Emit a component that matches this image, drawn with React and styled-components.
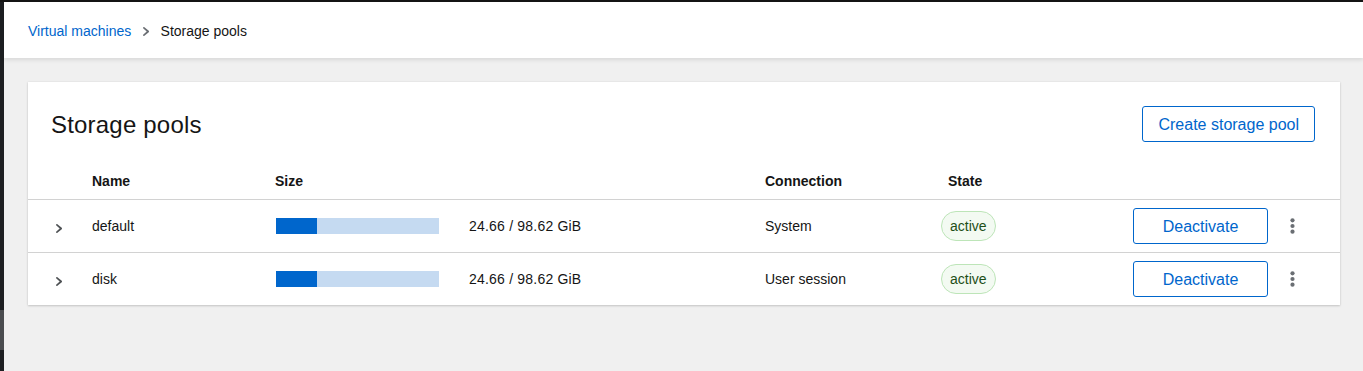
import styled, { createGlobalStyle } from "styled-components"

const GlobalStyle = createGlobalStyle`
  html, body {
    margin: 0;
    background: #f0f0f0;
  }
  body {
    font-family: "Liberation Sans", Arial, sans-serif;
    color: #151515;
    font-size: 14px;
  }
  * { box-sizing: border-box; }
`

const Frame = styled.div`
  display: flex;
  min-height: 100vh;
  border-top: 2px solid #151515;
`

const Rail = styled.div`
  width: 4px;
  flex: none;
  background: #1d1f22;
  padding-top: 308px;
`

const RailThumb = styled.div`
  height: 40px;
  background: #4a4c4f;
`

const Main = styled.div`
  flex: 1;
  display: flex;
  flex-direction: column;
`

const TopBar = styled.header`
  height: 56px;
  background: #fff;
  padding: 2px 24px 0;
  display: flex;
  align-items: center;
  box-shadow: 0 2px 4px rgba(3, 3, 3, 0.1);
  position: relative;
  z-index: 1;
`

const Crumbs = styled.nav`
  display: flex;
  align-items: center;
  font-size: 14px;
`

const CrumbLink = styled.a`
  color: #0066cc;
  text-decoration: none;
`

const CrumbSep = styled.span`
  display: flex;
  margin: 0 11px 0 12px;
  color: #6a6e73;
`

const Page = styled.main`
  padding: 24px 23px 24px 24px;
`

const Card = styled.section`
  background: #fff;
  box-shadow: 0 1px 2px rgba(3, 3, 3, 0.16), 0 0 2px rgba(3, 3, 3, 0.08);
`

const Toolbar = styled.div`
  display: flex;
  align-items: center;
  justify-content: space-between;
  padding: 24px 25px 18px 23px;
`

const Title = styled.h1`
  margin: 2px 0 0;
  font-size: 24px;
  font-weight: 400;
  line-height: 1.3;
  letter-spacing: 0.2px;
`

const Button = styled.button`
  height: 36px;
  width: ${p => p.$width || "auto"};
  padding: 2px 15px 0;
  background: #fff;
  border: 1px solid #0066cc;
  border-radius: 3px;
  color: #0066cc;
  font-family: inherit;
  font-size: 16px;
  cursor: pointer;
`

const Row = styled.div`
  display: grid;
  grid-template-columns: 64px 183px 490px 176px 1fr auto;
  align-items: center;
  height: ${p => (p.$head ? "40px" : p.$last ? "52px" : "53px")};
  border-bottom: ${p => (p.$last ? "none" : "1px solid #d2d2d2")};
  padding-top: ${p => (p.$head ? "2px" : "0")};
`

const HeadCell = styled.div`
  font-weight: 700;
  font-size: 14px;
  padding-left: ${p => p.$inset || 0}px;
`

const Cell = styled.div`
  display: flex;
  align-items: center;
`

const Toggle = styled.button`
  justify-self: center;
  display: flex;
  align-items: center;
  justify-content: center;
  width: 24px;
  height: 24px;
  padding: 0;
  margin-left: -2px;
  margin-top: 4px;
  border: 0;
  background: none;
  color: #4f5255;
`

const Track = styled.div`
  width: 163px;
  height: 16px;
  margin-left: 1px;
  background: #c5daf1;
`

const Fill = styled.div`
  height: 100%;
  background: #0066cc;
`

const SizeText = styled.span`
  margin-left: 30px;
  letter-spacing: 0.2px;
`

const Label = styled.span`
  display: inline-flex;
  align-items: center;
  height: 30px;
  padding: 0 8px;
  border: 1px solid #bde5b8;
  border-radius: 15px;
  background: #f3faf2;
  color: #1e4f18;
  font-size: 14px;
`

const Actions = styled.div`
  display: flex;
  align-items: center;
  gap: 12px;
  padding-right: 36px;
`

const Kebab = styled.button`
  width: 24px;
  height: 36px;
  padding: 0;
  border: 0;
  background: none;
  color: #6a6e73;
  display: flex;
  align-items: center;
  justify-content: center;
`

const AngleRight = ({ size = 8 }) => (
  <svg width={size * 0.7} height={size} viewBox="0 0 7 10" fill="currentColor">
    <path d="M1.6 0.2 L6.4 4.2 Q7.1 5 6.4 5.8 L1.6 9.8 Q0.9 10.3 0.3 9.6 Q-0.2 8.9 0.4 8.3 L4.1 5 L0.4 1.7 Q-0.2 1.1 0.3 0.4 Q0.9 -0.3 1.6 0.2 Z" />
  </svg>
)

const Dots = () => (
  <svg width="5" height="16" viewBox="0 0 5 16" fill="currentColor">
    <circle cx="2.5" cy="2.3" r="2.1" />
    <circle cx="2.5" cy="8" r="2.1" />
    <circle cx="2.5" cy="13.7" r="2.1" />
  </svg>
)

const pools = [
  { name: "default", used: 24.66, total: 98.62, connection: "System", state: "active" },
  { name: "disk", used: 24.66, total: 98.62, connection: "User session", state: "active" },
]

export default function App() {
  return (
    <>
      <GlobalStyle />
      <Frame>
        <Rail>
          <RailThumb />
        </Rail>
        <Main>
          <TopBar>
            <Crumbs>
              <CrumbLink href="#">Virtual machines</CrumbLink>
              <CrumbSep>
                <AngleRight size={9} />
              </CrumbSep>
              <span>Storage pools</span>
            </Crumbs>
          </TopBar>
          <Page>
            <Card>
              <Toolbar>
                <Title>Storage pools</Title>
                <Button>Create storage pool</Button>
              </Toolbar>
              <Row $head>
                <span />
                <HeadCell>Name</HeadCell>
                <HeadCell>Size</HeadCell>
                <HeadCell>Connection</HeadCell>
                <HeadCell $inset={7}>State</HeadCell>
                <span />
              </Row>
              {pools.map((p, i) => (
                <Row key={p.name} $last={i === pools.length - 1}>
                  <Toggle aria-label="Details">
                    <AngleRight size={9} />
                  </Toggle>
                  <Cell>{p.name}</Cell>
                  <Cell>
                    <Track>
                      <Fill style={{ width: `${(p.used / p.total) * 100}%` }} />
                    </Track>
                    <SizeText>
                      {p.used.toFixed(2)} / {p.total.toFixed(2)} GiB
                    </SizeText>
                  </Cell>
                  <Cell>{p.connection}</Cell>
                  <Cell>
                    <Label>{p.state}</Label>
                  </Cell>
                  <Actions>
                    <Button $width="135px">Deactivate</Button>
                    <Kebab aria-label="Actions">
                      <Dots />
                    </Kebab>
                  </Actions>
                </Row>
              ))}
            </Card>
          </Page>
        </Main>
      </Frame>
    </>
  )
}
